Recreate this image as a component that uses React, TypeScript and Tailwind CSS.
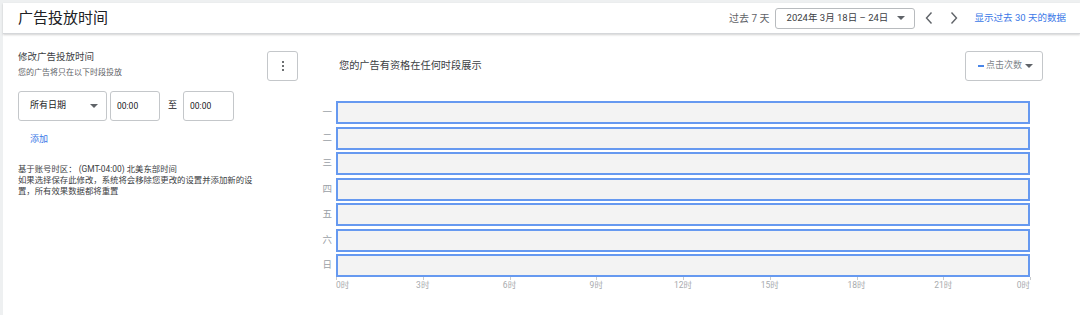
import React from 'react';

const days = ['一', '二', '三', '四', '五', '六', '日'];
const hours = ['0时', '3时', '6时', '9时', '12时', '15时', '18时', '21时', '0时'];

const Caret = () => (
  <span className="block w-0 h-0 border-l-[4px] border-r-[4px] border-t-[4px] border-l-transparent border-r-transparent border-t-[#5f6368]" />
);

const Chevron: React.FC<{ dir: 'left' | 'right' }> = ({ dir }) => (
  <svg width="10" height="14" viewBox="0 0 10 14" fill="none">
    <path
      d={dir === 'left' ? 'M7.5 1.5 L2.5 7 L7.5 12.5' : 'M2.5 1.5 L7.5 7 L2.5 12.5'}
      stroke="#5f6368"
      strokeWidth="1.4"
    />
  </svg>
);

const App: React.FC = () => {
  return (
    <div className="w-[1080px] h-[315px] overflow-hidden bg-[#eef0f1] pt-[3px] pl-[3px] font-['Roboto','Noto_Sans_CJK_SC',sans-serif]">
      <div className="bg-white h-full flex flex-col">
        {/* header */}
        <div className="h-[31px] flex items-center justify-between pl-[15px] pr-[14px] border-b border-[#d5d7da] shadow-[0_1px_2px_rgba(0,0,0,0.18)] relative z-10">
          <h1 className="text-[15px] text-[#202124] leading-none">广告投放时间</h1>
          <div className="flex items-center">
            <span className="text-[10px] text-[#5f6368] mr-[5px]">过去 7 天</span>
            <button className="w-[140px] h-[21px] border border-[#b8bbbe] rounded-[3px] flex items-center justify-between pl-[11px] pr-[9px]">
              <span className="text-[9.5px] text-[#3c4043]">2024年 3月 18日 – 24日</span>
              <Caret />
            </button>
            <div className="flex items-center ml-[9px] gap-[15px]">
              <Chevron dir="left" />
              <Chevron dir="right" />
            </div>
            <a className="ml-[16px] text-[9.5px] text-[#3b78e7]">显示过去 30 天的数据</a>
          </div>
        </div>

        {/* body */}
        <div className="flex flex-1">
          {/* left panel */}
          <div className="w-[295px] pl-[15px] pt-[17px]">
            <div className="flex justify-between items-start">
              <div>
                <div className="text-[9.5px] leading-[12px] text-[#3c4043]">修改广告投放时间</div>
                <div className="mt-[4px] text-[8px] leading-[11px] text-[#5f6368]">您的广告将只在以下时段投放</div>
              </div>
              <button className="w-[31px] h-[30px] border border-[#c4c7ca] rounded-[3px] flex flex-col items-center justify-center gap-[2px]">
                <span className="w-[2px] h-[2px] rounded-full bg-[#3c4043]" />
                <span className="w-[2px] h-[2px] rounded-full bg-[#3c4043]" />
                <span className="w-[2px] h-[2px] rounded-full bg-[#3c4043]" />
              </button>
            </div>

            <div className="flex items-center mt-[10px]">
              <div className="w-[89px] h-[30px] border border-[#c4c7ca] rounded-[3px] flex items-center justify-between pl-[11px] pr-[8px]">
                <span className="text-[9px] text-[#202124]">所有日期</span>
                <Caret />
              </div>
              <div className="ml-[3px] w-[50px] h-[30px] border border-[#c4c7ca] rounded-[3px] flex items-center pl-[6px]">
                <span className="text-[8.5px] text-[#202124]">00:00</span>
              </div>
              <span className="ml-[8px] text-[9px] text-[#202124]">至</span>
              <div className="ml-[6px] w-[51px] h-[30px] border border-[#c4c7ca] rounded-[3px] flex items-center pl-[6px]">
                <span className="text-[8.5px] text-[#202124]">00:00</span>
              </div>
            </div>

            <div className="mt-[12px] ml-[12px] text-[9px] leading-[12px] text-[#3b78e7]">添加</div>

            <div className="mt-[19px] w-[245px] text-[8.4px] leading-[11px] text-[#3c4043]">
              <div>基于账号时区： (GMT-04:00) 北美东部时间</div>
              <div>如果选择保存此修改，系统将会移除您更改的设置并添加新的设置，所有效果数据都将重置</div>
            </div>
          </div>

          {/* right panel */}
          <div className="flex-1 pt-[17px] pr-[37px]">
            <div className="flex items-center justify-between h-[30px]">
              <span className="ml-[41px] text-[10.2px] text-[#3c4043]">您的广告有资格在任何时段展示</span>
              <button className="w-[78px] h-[30px] border border-[#c4c7ca] rounded-[3px] flex items-center pl-[12px] pr-[9px]">
                <span className="w-[6px] h-[2px] bg-[#4a86e8] mr-[2px]" />
                <span className="text-[9px] text-[#80868b]">点击次数</span>
                <span className="ml-auto flex items-center"><Caret /></span>
              </button>
            </div>

            <div className="mt-[20px] flex flex-col">
              {days.map((d, i) => (
                <div key={d} className={`flex items-center ${i > 0 ? 'mt-[2.5px]' : ''}`}>
                  <span className="w-[38px] text-right pr-[4px] text-[9.5px] text-[#9aa0a6]">{d}</span>
                  <div className="w-[694px] h-[23px] bg-[#f3f3f3] border-2 border-[#6699f0]" />
                </div>
              ))}
              <div className="ml-[38px] w-[694px] relative h-[16px]">
                {hours.map((h, i) => {
                  const pct = (i / 8) * 100;
                  const align = i === 0 ? 'translate-x-0' : i === 8 ? '-translate-x-full' : '-translate-x-1/2';
                  return (
                    <div key={i} className="absolute top-0" style={{ left: `${pct}%` }}>
                      <div className="w-px h-[3px] bg-[#c8cacc]" />
                      <span className={`absolute top-[3px] left-0 ${align} text-[8.5px] leading-[11px] text-[#a8abae] whitespace-nowrap`}>
                        {h}
                      </span>
                    </div>
                  );
                })}
              </div>
            </div>
          </div>
        </div>
      </div>
    </div>
  );
};

export default App;
